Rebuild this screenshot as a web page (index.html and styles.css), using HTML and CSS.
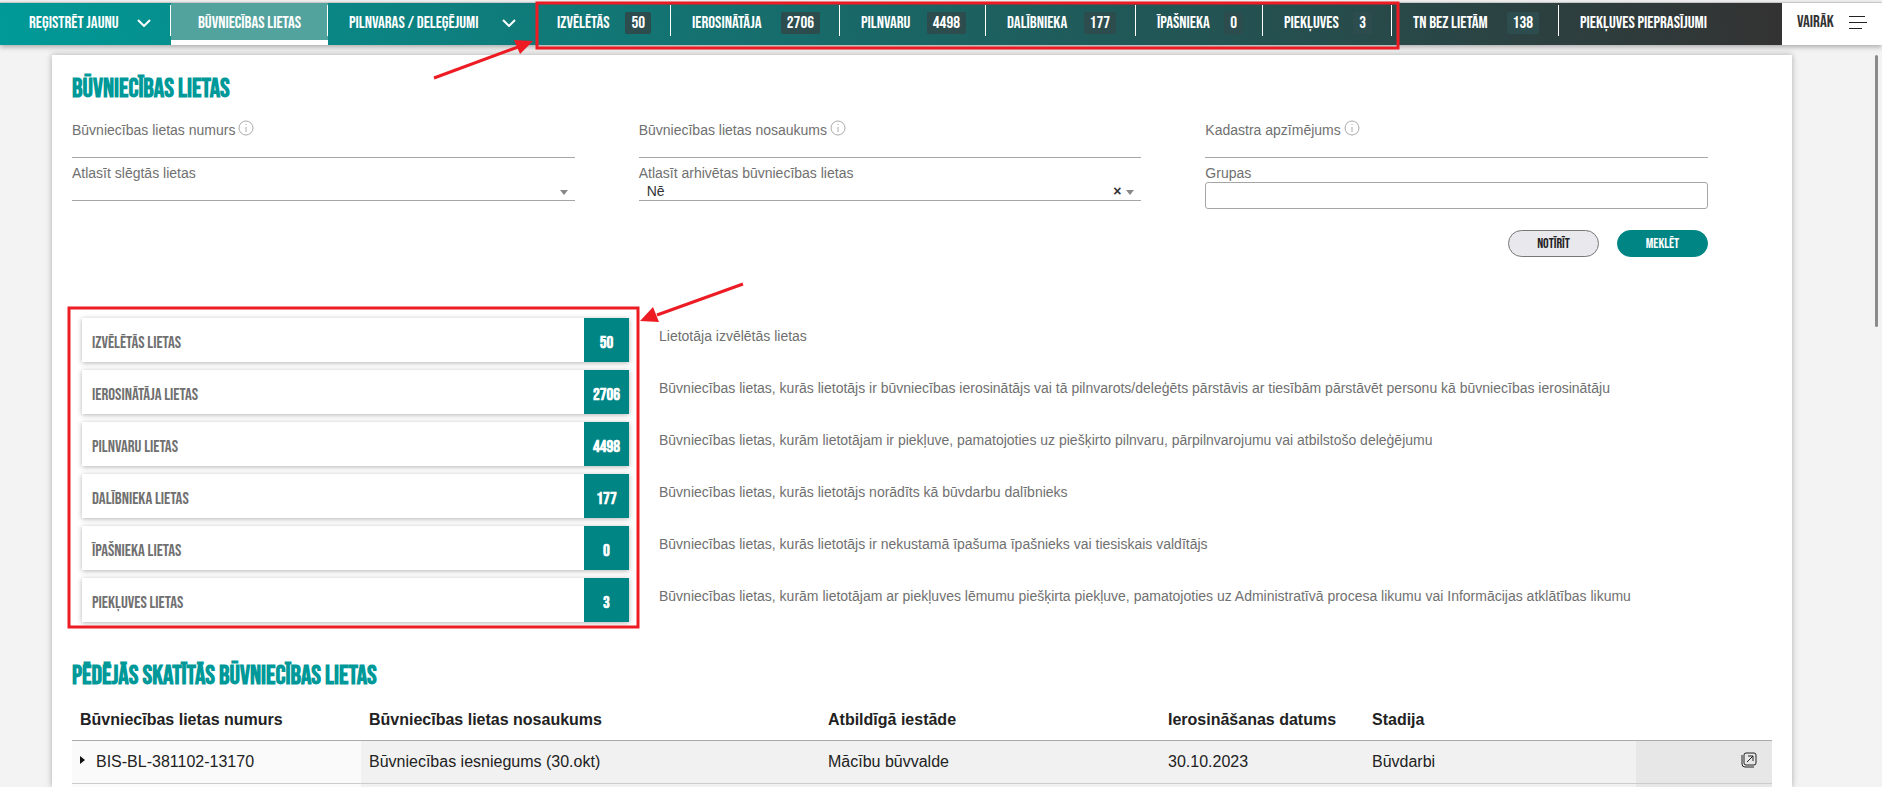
FILE: index.html
```html
<!DOCTYPE html>
<html lang="lv">
<head>
<meta charset="utf-8">
<title>Būvniecības lietas</title>
<link rel="stylesheet" href="styles.css">
</head>
<body>
<header class="topbar">
  <nav class="menu">
    <button class="menu-item first" type="button">Reģistrēt jaunu <svg class="chevron" viewBox="0 0 14 8"><path d="M1 1l6 6 6-6"/></svg></button>
    <a class="menu-item active" href="#">Būvniecības lietas</a>
    <button class="menu-item open-end" type="button">Pilnvaras / deleģējumi <svg class="chevron" viewBox="0 0 14 8"><path d="M1 1l6 6 6-6"/></svg></button>
    <a class="menu-item" href="#">Izvēlētās <span class="count">50</span></a>
    <a class="menu-item" href="#">Ierosinātāja <span class="count">2706</span></a>
    <a class="menu-item" href="#">Pilnvaru <span class="count">4498</span></a>
    <a class="menu-item" href="#">Dalībnieka <span class="count">177</span></a>
    <a class="menu-item" href="#">Īpašnieka <span class="count">0</span></a>
    <a class="menu-item" href="#">Piekļuves <span class="count">3</span></a>
    <a class="menu-item" href="#">TN bez lietām <span class="count">138</span></a>
    <a class="menu-item open-end" href="#">Piekļuves pieprasījumi</a>
  </nav>
  <button class="more" type="button">Vairāk <svg class="burger" viewBox="0 0 20 14"><path d="M1 1h16M1 7h18M1 13h13"/></svg></button>
</header>

<main class="sheet">
  <h1 class="title">Būvniecības lietas</h1>
  <form class="search">
    <div class="fields">
      <div class="field">
        <label class="label" for="number">Būvniecības lietas numurs<svg class="info" viewBox="0 0 16 16"><circle cx="8" cy="8" r="7"/><path d="M8 4v1M8 7v5"/></svg></label>
        <input class="line" id="number" type="text">
      </div>
      <div class="field">
        <label class="label" for="name">Būvniecības lietas nosaukums<svg class="info" viewBox="0 0 16 16"><circle cx="8" cy="8" r="7"/><path d="M8 4v1M8 7v5"/></svg></label>
        <input class="line" id="name" type="text">
      </div>
      <div class="field">
        <label class="label" for="cadastre">Kadastra apzīmējums<svg class="info" viewBox="0 0 16 16"><circle cx="8" cy="8" r="7"/><path d="M8 4v1M8 7v5"/></svg></label>
        <input class="line" id="cadastre" type="text">
      </div>
      <div class="field">
        <label class="label" for="closed">Atlasīt slēgtās lietas</label>
        <div class="picker"><select class="select" id="closed"><option></option><option>Jā</option></select></div>
      </div>
      <div class="field">
        <label class="label" for="archived">Atlasīt arhivētas būvniecības lietas</label>
        <div class="picker"><select class="select" id="archived"><option>Nē</option><option>Jā</option></select><button class="clear" type="button" aria-label="Notīrīt izvēli">×</button></div>
      </div>
      <div class="field">
        <label class="label" for="groups">Grupas</label>
        <input class="box" id="groups" type="text">
      </div>
    </div>
    <div class="actions">
      <button class="pill" type="reset">Notīrīt</button>
      <button class="pill primary" type="submit">Meklēt</button>
    </div>
  </form>

  <section class="groups">
    <div class="group"><a class="tile" href="#">Izvēlētās lietas<span class="total">50</span></a><p class="about">Lietotāja izvēlētās lietas</p></div>
    <div class="group"><a class="tile" href="#">Ierosinātāja lietas<span class="total">2706</span></a><p class="about">Būvniecības lietas, kurās lietotājs ir būvniecības ierosinātājs vai tā pilnvarots/deleģēts pārstāvis ar tiesībām pārstāvēt personu kā būvniecības ierosinātāju</p></div>
    <div class="group"><a class="tile" href="#">Pilnvaru lietas<span class="total">4498</span></a><p class="about">Būvniecības lietas, kurām lietotājam ir piekļuve, pamatojoties uz piešķirto pilnvaru, pārpilnvarojumu vai atbilstošo deleģējumu</p></div>
    <div class="group"><a class="tile" href="#">Dalībnieka lietas<span class="total">177</span></a><p class="about">Būvniecības lietas, kurās lietotājs norādīts kā būvdarbu dalībnieks</p></div>
    <div class="group"><a class="tile" href="#">Īpašnieka lietas<span class="total">0</span></a><p class="about">Būvniecības lietas, kurās lietotājs ir nekustamā īpašuma īpašnieks vai tiesiskais valdītājs</p></div>
    <div class="group"><a class="tile" href="#">Piekļuves lietas<span class="total">3</span></a><p class="about">Būvniecības lietas, kurām lietotājam ar piekļuves lēmumu piešķirta piekļuve, pamatojoties uz Administratīvā procesa likumu vai Informācijas atklātības likumu</p></div>
  </section>

  <h2 class="title">Pēdējās skatītās būvniecības lietas</h2>
  <table class="recent">
    <thead>
      <tr><th class="c-number">Būvniecības lietas numurs</th><th class="c-name">Būvniecības lietas nosaukums</th><th class="c-office">Atbildīgā iestāde</th><th class="c-date">Ierosināšanas datums</th><th class="c-stage">Stadija</th><th class="c-open"></th></tr>
    </thead>
    <tbody>
      <tr><td><span class="number">BIS-BL-381102-13170</span></td><td>Būvniecības iesniegums (30.okt)</td><td>Mācību būvvalde</td><td>30.10.2023</td><td>Būvdarbi</td><td><a class="open" href="#" aria-label="Atvērt"><svg class="open-icon" viewBox="0 0 16 16"><rect x="3" y="1" width="12" height="12" rx="2"/><path d="M1 3v9a3 3 0 0 0 3 3h9M6 10l6-6M7 4h5v5"/></svg></a></td></tr>
      <tr><td></td><td></td><td></td><td></td><td></td><td></td></tr>
    </tbody>
  </table>
</main>

<div class="scroll-thumb"></div>
<svg class="marks" viewBox="0 0 1882 787">
  <rect x="537" y="3" width="861" height="45"/>
  <rect x="69" y="308" width="569" height="319"/>
  <path d="M434 78l84-31M743 284l-86 31"/>
  <path class="head" d="M533 41l-19-1 6 14zM640 321l13-14 6 15z"/>
</svg>
</body>
</html>
```

FILE: styles.css
```css
* { box-sizing: border-box; }

:root {
  --caps: "Bebas Neue", "Liberation Sans Narrow", "Roboto", sans-serif;
  --body: "Liberation Sans", Arial, sans-serif;
  --teal: #008585;
}

body {
  display: flex;
  flex-direction: column;
  margin: 0;
  padding-top: 2px;
  height: 100vh;
  overflow: hidden;
  background: #f3f3f3;
  color: #222;
  font-family: var(--body);
  font-size: 14px;
}

button, a { color: inherit; font: inherit; text-decoration: none; }
button { border: 0; background: none; padding: 0; cursor: pointer; }

.topbar {
  display: flex;
  flex: none;
  height: 43px;
  border-top: 1px solid #c8c8c8;
  box-shadow: 0 2px 5px rgba(0, 0, 0, .3);
  background: #fff;
}

.menu {
  flex: 1;
  display: grid;
  grid-template-columns: 171fr 157fr 208fr 135fr 169fr 146fr 150fr 127fr 129fr 167fr 223fr;
  background: linear-gradient(75deg, #009a98, #333 99%);
  color: #fff;
}

.menu-item, .more {
  font-family: var(--caps);
  font-size: 17px;
  line-height: 20px;
  text-transform: uppercase;
  white-space: nowrap;
  display: flex;
  align-items: center;
  justify-content: space-between;
}

.menu-item {
  padding: 0 20px 2px 21px;
  background: linear-gradient(#fff, #fff) right 2px / 1px 31px no-repeat;
}

.menu-item.first { padding-left: 29px; }
.menu-item.open-end { background: none; }
.menu-item.active {
  justify-content: center;
  background-color: #52a39e;
  border-bottom: 5px solid #fff;
  padding: 3px 0 0;
}

.chevron { width: 14px; height: 8px; fill: none; stroke: #fff; stroke-width: 2; }

.count {
  padding: 1px 6px;
  border-radius: 2px;
  background: #2c4c4e;
}

.more { width: 100px; padding: 0 14px 4px 15px; color: #333; }
.burger { width: 20px; height: 14px; fill: none; stroke: #222; stroke-width: 1; shape-rendering: crispEdges; }

.sheet {
  flex: 1;
  min-height: 0;
  margin: 10px 90px 0 52px;
  padding: 22px 20px 0;
  overflow: hidden;
  background: #fff;
  box-shadow: 0 0 6px rgba(0, 0, 0, .3);
}

.title {
  margin: 0;
  color: #009999;
  font-family: var(--caps);
  font-size: 26px;
  line-height: 26px;
  text-transform: uppercase;
}

.search { margin: 11px 64px 0 0; }

.fields { display: grid; grid-template-columns: repeat(3, 1fr); column-gap: 64px; }
.field { display: flex; flex-direction: column; color: #707070; }
.field .label { height: 18px; margin-top: 6px; line-height: 18px; white-space: nowrap; }
.field:nth-child(-n+3) { height: 44px; justify-content: space-between; }

.info { width: 16px; height: 16px; margin-left: 3px; vertical-align: -1px; fill: none; stroke: #aaa; }

.line, .select, .box { width: 100%; font: inherit; color: #333; outline: 0; background: #fff; }
.line { height: 19px; border: 0; border-bottom: 1px solid #a6a6a6; }
.box { height: 27px; border: 1px solid #a6a6a6; border-radius: 3px; }

.picker { position: relative; }
.select {
  display: block;
  height: 19px;
  padding: 0 8px;
  border: 0;
  border-bottom: 1px solid #a6a6a6;
  border-radius: 0;
  appearance: none;
}
.picker::after {
  content: "";
  position: absolute;
  right: 7px;
  top: 8px;
  border: 4px solid transparent;
  border-top: 5px solid #888;
  border-bottom: 0;
}
.clear { position: absolute; right: 20px; top: 1px; color: #333; font-weight: 700; line-height: 16px; }

.actions { display: flex; justify-content: flex-end; gap: 18px; margin-top: 21px; }
.pill {
  width: 91px;
  height: 27px;
  border: 1px solid #777;
  border-radius: 14px;
  background: #e8e8ed;
  font-family: var(--caps);
  font-size: 14px;
  text-transform: uppercase;
}
.pill.primary { border-color: var(--teal); background: var(--teal); color: #fff; }

.groups { display: grid; gap: 8px; margin: 61px 0 0 10px; }
.group { display: grid; grid-template-columns: 547fr 1113fr; column-gap: 30px; }
.tile {
  display: flex;
  justify-content: space-between;
  height: 44px;
  padding-left: 10px;
  box-shadow: 0 1px 5px rgba(0, 0, 0, .3);
  color: #707070;
  font-family: var(--caps);
  font-size: 17px;
  line-height: 50px;
  text-transform: uppercase;
}
.total { width: 45px; background: var(--teal); color: #fff; font-weight: 700; text-align: center; }
.about { margin: 0; color: #707070; line-height: 36px; white-space: nowrap; }

.groups + .title { margin-top: 42px; }

.recent {
  width: 100%;
  margin-top: 11px;
  table-layout: fixed;
  border-collapse: collapse;
  font-size: 16px;
}
.recent th, .recent td { height: 43px; padding: 0 8px; text-align: left; white-space: nowrap; }
.recent th { height: 39px; border-bottom: 1px solid #aaa; }
.recent td { border-bottom: 1px solid #ccc; background: #f1f1f1; }
.recent td:first-child { background: #fafafa; }
.recent td:last-child { background: #e7e7e7; text-align: right; padding-right: 15px; }
.c-number { width: 17%; }
.c-name { width: 27%; }
.c-office { width: 20%; }
.c-date { width: 12%; }
.c-stage { width: 16%; }
.c-open { width: 8%; }

.number { display: flex; align-items: center; gap: 11px; }
.number::before {
  content: "";
  margin-bottom: 4px;
  border: 4px solid transparent;
  border-left: 5px solid #111;
  border-right: 0;
}
.open { display: inline-block; }
.open-icon { display: block; width: 16px; height: 16px; fill: none; stroke: #222; }

.scroll-thumb {
  position: absolute;
  top: 55px;
  right: 4px;
  width: 3px;
  height: 272px;
  border-radius: 2px;
  background: #8b8b8b;
}

.marks {
  position: absolute;
  top: 0;
  left: 0;
  width: 100%;
  pointer-events: none;
  fill: none;
  stroke: #ed1c24;
  stroke-width: 3;
}
.marks .head { fill: #ed1c24; stroke: none; }
```
